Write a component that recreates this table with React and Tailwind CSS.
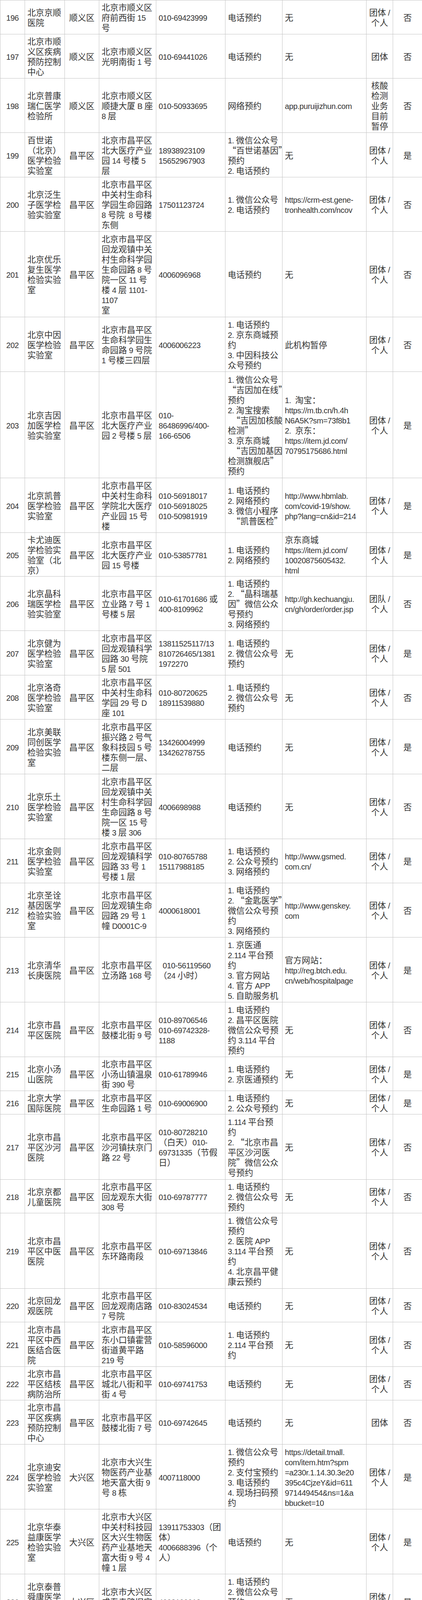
import React from 'react'

// column widths, alignment and padding, left to right
const COLUMNS = [
  { width: 'w-[63px]', cell: 'text-center px-[4px]' },
  { width: 'w-[102px]', cell: 'text-left px-[6px]' },
  { width: 'w-[88px]', cell: 'text-center px-[4px]' },
  { width: 'w-[146px]', cell: 'text-left px-[6px]' },
  { width: 'w-[177px]', cell: 'text-left px-[6px]' },
  { width: 'w-[146px]', cell: 'text-left px-[6px]' },
  { width: 'w-[215px]', cell: 'text-left px-[6px]' },
  { width: 'w-[68px]', cell: 'text-center px-[2px]' },
  { width: 'w-[75px]', cell: 'text-center px-[4px]' },
]

const TT = '团体 /|个人'

// [row height, no., name, district, address, phone, booking, website, type, flag]
// lines inside a cell are separated by "|"
const ROWS = [
  ['h-[87px]', '196', '北京京顺|医院', '顺义区', '北京市顺义区|府前西街 15|号', '010-69423999', '电话预约', '无', TT, '否'],
  ['h-[113px]', '197', '北京市顺|义区疾病|预防控制|中心', '顺义区', '北京市顺义区|光明南街 1 号', '010-69441026', '电话预约', '无', '团体', '否'],
  ['h-[139px]', '198', '北京普康|瑞仁医学|检验所', '顺义区', '北京市顺义区|顺捷大厦 B 座|8 层', '010-50933695', '网络预约', 'app.puruijizhun.com', '核酸|检测|业务|目前|暂停', '否'],
  ['h-[114px]', '199', '百世诺|（北京）|医学检验|实验室', '昌平区', '北京市昌平区|北大医疗产业|园 14 号楼 5|层', '18938923109|15652967903', '1. 微信公众号|“百世诺基因”|预约|2. 电话预约', '无', TT, '是'],
  ['h-[139px]', '200', '北京泛生|子医学检|验实验室', '昌平区', '北京市昌平区|中关村生命科|学园生命园路|8 号院  8 号楼|东侧', '17501123724', '1. 微信公众号|2. 电话预约', 'https://crm-est.gene-|tronhealth.com/ncov', TT, '否'],
  ['h-[219px]', '201', '北京优乐|复生医学|检验实验|室', '昌平区', '北京市昌平区|回龙观镇中关|村生命科学园|生命园路 8 号|院一区 11 号|楼 4 层 1101-|1107|室', '4006096968', '电话预约', '无', TT, '否'],
  ['h-[140px]', '202', '北京中因|医学检验|实验室', '昌平区', '北京市昌平区|生命科学园生|命园路 9 号院|1 号楼三四层', '4006006223', '1. 电话预约|2. 京东商城预|约|3. 中因科技公|众号预约', '此机构暂停', TT, '否'],
  ['h-[272px]', '203', '北京吉因|加医学检|验实验室', '昌平区', '北京市昌平区|北大医疗产业|园 2 号楼 5 层', '010-|86486996/400-|166-6506', '1. 微信公众号|“吉因加在线”|预约|2. 淘宝搜索|  “吉因加核酸|检测”|3. 京东商城|  “吉因加基因|检测旗舰店”|预约', '1.  淘宝：|https://m.tb.cn/h.4h|N6A5K?sm=73f8b1|2.  京东：|https://item.jd.com/|70795175686.html', TT, '是'],
  ['h-[140px]', '204', '北京凯普|医学检验|实验室', '昌平区', '北京市昌平区|中关村生命科|学院北大医疗|产业园 15 号|楼', '010-56918017|010-56918025|010-50981919', '1. 电话预约|2. 网络预约|3. 微信小程序|  “凯普医检”', 'http://www.hbmlab.|com/covid-19/show.|php?lang=cn&id=214', TT, '是'],
  ['h-[112px]', '205', '卡尤迪医|学检验实|验室（北|京）', '昌平区', '北京市昌平区|北大医疗产业|园 15 号楼', '010-53857781', '1. 电话预约|2. 网络预约', '京东商城|https://item.jd.com/|10020875605432.|html', TT, '是'],
  ['h-[139px]', '206', '北京晶科|瑞医学检|验实验室', '昌平区', '北京市昌平区|立业路 7 号 1|号楼 5 层', '010-61701686 或|400-8109962', '1. 电话预约|2. “晶科瑞基|因”微信公众|号预约|3. 网络预约', 'http://gh.kechuangju.|cn/gh/order/order.jsp', '团队 /|个人', '否'],
  ['h-[114px]', '207', '北京健为|医学检验|实验室', '昌平区', '北京市昌平区|回龙观镇科学|园路 30 号院|5 层 501', '13811525117/13|810726465/1381|1972270', '1. 电话预约|2. 微信公众号|预约', '无', TT, '是'],
  ['h-[113px]', '208', '北京洛奇|医学检验|实验室', '昌平区', '北京市昌平区|中关村生命科|学园 29 号 D|座 101', '010-80720625|18911539880', '1. 电话预约|2. 微信公众号|预约', '无', TT, '否'],
  ['h-[140px]', '209', '北京美联|同创医学|检验实验|室', '昌平区', '北京市昌平区|振兴路 2 号气|象科技园 5 号|楼东侧一层、|二层', '13426004999|13426278755', '电话预约', '无', TT, '是'],
  ['h-[166px]', '210', '北京乐土|医学检验|实验室', '昌平区', '北京市昌平区|回龙观镇中关|村生命科学园|生命园路 8 号|院一区 15 号|楼 3 层 306', '4006698988', '电话预约', '无', TT, '否'],
  ['h-[113px]', '211', '北京金则|医学检验|实验室', '昌平区', '北京市昌平区|回龙观镇科学|园路 33 号 1|号楼 1 层', '010-80765788|15117988185', '1. 电话预约|2. 公众号预约|3. 网络预约', 'http://www.gsmed.|com.cn/', TT, '是'],
  ['h-[139px]', '212', '北京圣诠|基因医学|检验实验|室', '昌平区', '北京市昌平区|回龙观镇生命|园路 29 号 1|幢 D0001C-9', '4000618001', '1. 电话预约|2. “金匙医学”|微信公众号预|约|3. 网络预约', 'http://www.genskey.|com', TT, '否'],
  ['h-[166px]', '213', '北京清华|长庚医院', '昌平区', '北京市昌平区|立汤路 168 号', '  010-56119560|（24 小时）', '1. 京医通|2.114 平台预|约|3. 官方网站|4. 官方 APP|5. 自助服务机', '官方网站：|http://reg.btch.edu.|cn/web/hospitalpage', TT, '是'],
  ['h-[140px]', '214', '北京市昌|平区医院', '昌平区', '北京市昌平区|鼓楼北街 9 号', '010-89706546|010-69742328-|1188', '1. 电话预约|2. 昌平区医院|微信公众号预|约 3.114 平台|预约', '无', TT, '否'],
  ['h-[87px]', '215', '北京小汤|山医院', '昌平区', '北京市昌平区|小汤山镇温泉|街 390 号', '010-61789946', '1. 电话预约|2. 京医通预约', '无', TT, '是'],
  ['h-[60px]', '216', '北京大学|国际医院', '昌平区', '北京市昌平区|生命园路 1 号', '010-69006900', '1. 电话预约|2. 公众号预约', '无', TT, '是'],
  ['h-[167px]', '217', '北京市昌|平区沙河|医院', '昌平区', '北京市昌平区|沙河镇扶京门|路 22 号', '010-80728210|（白天）010-|69731335（节假|日）', '1.114 平台预|约|2. “北京市昌|平区沙河医|院”微信公众|号预约', '无', TT, '否'],
  ['h-[86px]', '218', '北京京都|儿童医院', '昌平区', '北京市昌平区|回龙观东大街|308 号', '010-69787777', '1. 电话预约|2. 微信公众号|预约', '无', TT, '否'],
  ['h-[193px]', '219', '北京市昌|平区中医|医院', '昌平区', '北京市昌平区|东环路南段', '010-69713846', '1. 微信公众号|预约|2. 医院 APP|3.114 平台预|约|4. 北京昌平健|康云预约', '无', TT, '否'],
  ['h-[86px]', '220', '北京回龙|观医院', '昌平区', '北京市昌平区|回龙观南店路|7 号院', '010-83024534', '电话预约', '无', TT, '否'],
  ['h-[114px]', '221', '北京市昌|平区中西|医结合医|院', '昌平区', '北京市昌平区|东小口镇霍营|街道黄平路|219 号', '010-58596000', '1. 电话预约|2.114 平台预|约', '无', TT, '否'],
  ['h-[86px]', '222', '北京市昌|平区结核|病防治所', '昌平区', '北京市昌平区|城北八街和平|街 4 号', '010-69741753', '电话预约', '无', TT, '否'],
  ['h-[113px]', '223', '北京市昌|平区疾病|预防控制|中心', '昌平区', '北京市昌平区|鼓楼北街 7 号', '010-69742645', '电话预约', '无', '团体', '否'],
  ['h-[166px]', '224', '北京迪安|医学检验|实验室', '大兴区', '北京市大兴生|物医药产业基|地天富大街 9|号 8 栋', '4007118000', '1. 微信公众号|预约|2. 支付宝预约|3. 电话预约|4. 现场扫码预|约', 'https://detail.tmall.|com/item.htm?spm|=a230r.1.14.30.3e20|395c4CjzeY&id=611|971449454&ns=1&a|bbucket=10', TT, '是'],
  ['h-[166px]', '225', '北京华泰|益康医学|检验实验|室', '大兴区', '北京市大兴区|中关村科技园|区大兴生物医|药产业基地天|富大街 9 号 4|幢 1 层', '13911753303（团|体）|4006688396（个|人）', '电话预约', '无', TT, '是'],
  ['h-[140px]', '226', '北京泰普|舜康医学|检验实验|室', '大兴区', '北京市大兴区|成寿寺路旧宫|一号', '4008100013', '1. 电话预约|2. 微信公众号|预约|3.114 平台预|约', '无', TT, '是'],
  ['h-[166px]', '227', '北京博昊|云天医学|检验实验|室', '大兴区', '北京市大兴区|中关村科技园|区大兴生物医|药产业基地天|荣街 9 号 3 号|楼 2 层', '13716736766', '1. 电话预约', 'https://mp.genolyses.|cn', '团体|/ 个|人', '否'],
  ['h-[87px]', '228', '北京嘉宝|医学检验|实验室', '大兴区', '北京市大兴区|天荣街 19 号', '010-68056969', '1. 电话预约', '无', '团体|/ 个|人', '是'],
  ['h-[166px]', '229', '中国中医|科学院广|安门医院|（北京市|大兴区中|医医院）', '大兴区', '北京市大兴区|清源街道兴丰|大街二段 138|号', '010-60283725', '1. 现场预约|2. 健康大兴|APP|3.114 平台预|约', '无', TT, '否'],
  ['h-[166px]', '230', '北京市大|兴区人民|医院', '大兴区', '北京市大兴区|黄村西大街|26 号', '010-60283006', '1. 健康大兴|APP|2.114 平台预|约|3. 掌上兴医|APP', '无', TT, '否'],
  ['h-[113px]', '231', '北京市仁|和医院', '大兴区', '北京市大兴区|兴丰大街一号', '010-69242469-', '1. 健康大兴|APP|2.114 平台预|约', '无', TT, '否'],
  ['h-[192px]', '232', '北京市大|兴区中西|医结合医|院', '大兴区', '北京市大兴区|瀛海镇中兴南|路 3 号', '010-69270706', '1. 健康大兴|APP|2.114 平台预|约|3. 大兴区中西|医结合医院微|信公众号', '无', TT, '否'],
  ['h-[113px]', '233', '北京市大|兴区心康|医院', '大兴区', '北京市大兴区|黄村镇黄良路|口北侧', '010-61214327', '1. 健康大兴|APP|2.114 平台预|约', '无', TT, '否'],
  ['h-[193px]', '234', '北京市大|兴区妇幼|保健院', '大兴区', '北京市大兴区|兴丰大街三段|56 号', '010-69242081-|8000', '1. 健康大兴|APP|2.114 平台预|约|3. 大兴区妇幼|保健院微信公|众号', '无', TT, '否'],
  ['h-[112px]', '235', '北京市大|兴区疾病|预防控制|中心', '大兴区', '北京市大兴区|黄村西大街|33 号', '010-69243553（值|班室）', '电话预约', '无', '团体', '否'],
]

// latin runs are set narrower, like the condensed digits in the scan
function Line({ text }) {
  const parts = text.split(/([\x20-\x7E]+)/).filter(Boolean)
  return (
    <div className="h-[26px] leading-[26px] whitespace-pre">
      {parts.map((p, i) =>
        /^[\x20-\x7E]+$/.test(p) ? (
          <span key={i} className="font-['Liberation_Sans',sans-serif] text-[20px] tracking-[-0.4px]">
            {p}
          </span>
        ) : (
          <span key={i}>{p}</span>
        )
      )}
    </div>
  )
}

function Cell({ text, cell }) {
  return (
    <td className={`border border-[#c4c4c4] py-0 align-middle ${cell}`}>
      {text.split('|').map((line, i) => (
        <Line key={i} text={line} />
      ))}
    </td>
  )
}

export default function App() {
  return (
    <div className="w-[1080px] bg-white text-[#333] font-['Noto_Sans_CJK_SC',sans-serif] text-[21.6px] leading-[26px]">
      <table className="w-[1080px] table-fixed border-collapse">
        <colgroup>
          {COLUMNS.map((c, i) => (
            <col key={i} className={c.width} />
          ))}
        </colgroup>
        <tbody>
          {ROWS.map(([height, ...cells]) => (
            <tr key={cells[0]} className={height}>
              {cells.map((text, i) => (
                <Cell key={i} text={text} cell={COLUMNS[i].cell} />
              ))}
            </tr>
          ))}
        </tbody>
      </table>
    </div>
  )
}
